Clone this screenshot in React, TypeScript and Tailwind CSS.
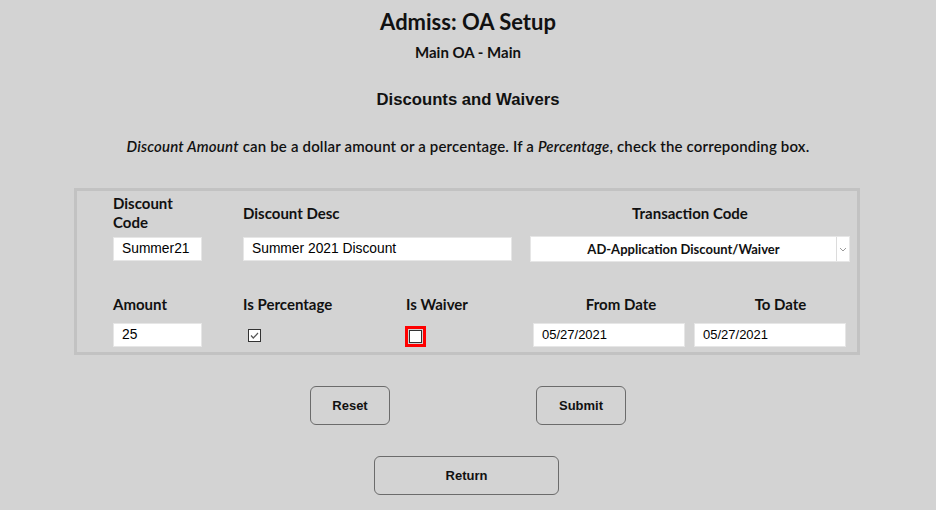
import React from "react";

const geo = { fontFamily: "Lato, 'Open Sans', sans-serif" };
const arial = { fontFamily: "'Liberation Sans', Arial, sans-serif" };

function Label({ children, className = "" }: { children: React.ReactNode; className?: string }) {
  return (
    <div className={`text-[15px] font-bold leading-[19px] text-[#111] ${className}`} style={geo}>
      {children}
    </div>
  );
}

function TextBox({
  value,
  w,
  className = "",
  size = "text-[13.8px]",
}: {
  value: string;
  w: string;
  className?: string;
  size?: string;
}) {
  return (
    <div
      className={`${w} h-[24px] bg-white border border-[#e6e6e6] flex items-center pl-[8px] ${size} text-black ${className}`}
      style={arial}
    >
      {value}
    </div>
  );
}

export default function App() {
  return (
    <div className="w-[936px] h-[510px] bg-[#d3d3d3] text-[#111] overflow-hidden">
      <div className="flex flex-col items-center">
        <h1 className="mt-[8px] text-[22px] font-bold leading-[27px]" style={geo}>
          Admiss: OA Setup
        </h1>
        <div className="mt-[8px] text-[15px] font-bold leading-[18px]" style={geo}>
          Main OA - Main
        </div>
        <div className="mt-[29px] text-[16.7px] font-bold leading-[20px]" style={arial}>
          Discounts and Waivers
        </div>
        <div className="mt-[27px] text-[15px] font-semibold leading-[18px] tracking-[0.17px]" style={geo}>
          <i>Discount Amount</i> can be a dollar amount or a percentage. If a <i>Percentage</i>, check the correponding box.
        </div>
      </div>

      <div className="ml-[74px] mt-[33px] w-[786px] h-[167px] border-[3px] border-[#c2c2c2] pl-[36px] pt-[1px]">
        <div className="flex">
          <div className="w-[130px]">
            <div className="h-[42px] flex items-center">
              <Label>
                Discount
                <br />
                Code
              </Label>
            </div>
            <TextBox value="Summer21" w="w-[89px]" className="mt-[3px]" />
          </div>
          <div className="w-[287px]">
            <div className="h-[42px] flex items-center">
              <Label>Discount Desc</Label>
            </div>
            <TextBox value="Summer 2021 Discount" w="w-[269px]" className="mt-[3px]" />
          </div>
          <div className="w-[320px]">
            <div className="h-[42px] flex items-center justify-center">
              <Label>Transaction Code</Label>
            </div>
            <div className="mt-[2px] w-[320px] h-[26px] bg-white border border-[#e6e6e6] flex">
              <div className="flex-1 flex items-center justify-center text-[13px] font-bold pt-[1px]" style={geo}>
                AD-Application Discount/Waiver
              </div>
              <div className="w-[13px] border-l border-[#dcdcdc] flex items-center justify-center">
                <svg width="8" height="5" viewBox="0 0 8 5">
                  <path d="M1 1 L4 4 L7 1" stroke="#9a9a9a" strokeWidth="1" fill="none" />
                </svg>
              </div>
            </div>
          </div>
        </div>

        <div className="flex mt-[33px]">
          <div className="w-[130px]">
            <Label>Amount</Label>
            <TextBox value="25" w="w-[89px]" className="mt-[9px] pl-[6px]" />
          </div>
          <div className="w-[163px]">
            <Label>Is Percentage</Label>
            <div className="mt-[15px] ml-[5px] w-[13px] h-[13px] border border-[#333] bg-white flex items-center justify-center">
              <svg width="11" height="11" viewBox="0 0 11 11">
                <path d="M2 5.5 L4.3 8 L9 3" stroke="#555" strokeWidth="1.2" fill="none" />
              </svg>
            </div>
          </div>
          <div className="w-[127px]">
            <Label>Is Waiver</Label>
            <div className="mt-[12px] -ml-[1px] w-[21px] h-[21px] border-[3px] border-[#ff0000] flex items-center justify-center">
              <div className="w-[13px] h-[13px] border border-[#333] bg-white" />
            </div>
          </div>
          <div className="w-[161px]">
            <Label className="text-center pl-[15px]">From Date</Label>
            <TextBox value="05/27/2021" w="w-[152px]" size="text-[13px]" className="mt-[9px] pl-[6px]" />
          </div>
          <div className="w-[152px]">
            <Label className="text-center pl-[21px]">To Date</Label>
            <TextBox value="05/27/2021" w="w-[152px]" size="text-[13px]" className="mt-[9px] pl-[6px]" />
          </div>
        </div>
      </div>

      <div className="flex mt-[31px]">
        <button
          className="ml-[310px] w-[80px] h-[39px] border border-[#6b6b6b] rounded-[6px] bg-[#d3d3d3] text-[13px] font-bold"
          style={arial}
        >
          Reset
        </button>
        <button
          className="ml-[146px] w-[90px] h-[39px] border border-[#6b6b6b] rounded-[6px] bg-[#d3d3d3] text-[13px] font-bold"
          style={arial}
        >
          Submit
        </button>
      </div>
      <div className="flex mt-[31px]">
        <button
          className="ml-[374px] w-[185px] h-[39px] border border-[#6b6b6b] rounded-[6px] bg-[#d3d3d3] text-[13px] font-bold"
          style={arial}
        >
          Return
        </button>
      </div>
    </div>
  );
}
